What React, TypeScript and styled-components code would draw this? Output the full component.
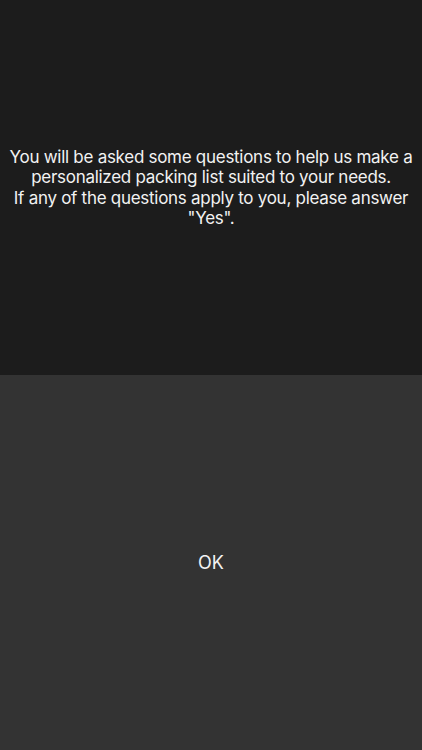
import styled, { createGlobalStyle } from "styled-components";

const GlobalStyle = createGlobalStyle`
  html, body {
    margin: 0;
    padding: 0;
    background: #1b1b1b;
  }
  #root {
    height: 750px;
  }
`;

const App = () => {
  return (
    <>
      <GlobalStyle />
      <Screen>
        <Intro>
          <Message>
            You will be asked some questions to help us make a personalized
            packing list suited to your needs.
            <br />
            If any of the questions apply to you, please answer "Yes".
          </Message>
        </Intro>
        <OkButton type="button">OK</OkButton>
      </Screen>
    </>
  );
};

export default App;

const Screen = styled.main`
  width: 422px;
  height: 750px;
  display: flex;
  flex-direction: column;
  font-family: "Inter", "Liberation Sans", sans-serif;
`;

const Intro = styled.section`
  height: 375px;
  background: #1c1c1c;
  display: flex;
  align-items: center;
  justify-content: center;
  padding: 0 4px;
  box-sizing: border-box;
`;

const Message = styled.p`
  margin: 0;
  color: #f2f2f2;
  font-size: 17px;
  font-weight: 400;
  line-height: 20.5px;
  letter-spacing: -0.28px;
  text-align: center;
`;

const OkButton = styled.button`
  flex: 1;
  border: none;
  margin: 0;
  background: #333333;
  color: #f2f2f2;
  font-family: inherit;
  font-size: 18px;
  font-weight: 400;
  cursor: pointer;
`;
